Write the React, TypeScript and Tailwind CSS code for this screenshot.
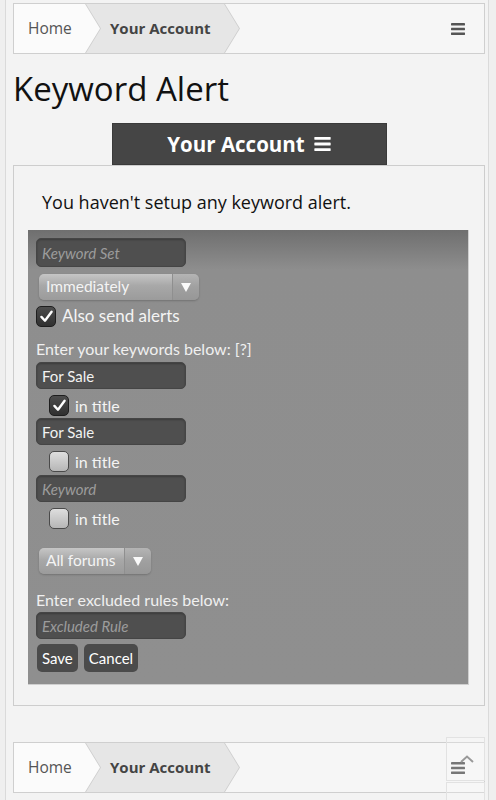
import React from 'react';

function Hamburger({ className }: { className?: string }) {
  return (
    <svg className={className} viewBox="0 0 14 12" fill="currentColor">
      <rect x="0" y="0" width="14" height="2.4" rx="0.4" />
      <rect x="0" y="4.8" width="14" height="2.4" rx="0.4" />
      <rect x="0" y="9.6" width="14" height="2.4" rx="0.4" />
    </svg>
  );
}

function Breadcrumb() {
  return (
    <div className="flex h-[51px] items-stretch border border-[#cfcfcf] bg-[#f6f6f6]">
      <div className="flex w-[86px] shrink-0 items-center bg-[#fbfbfb] pl-[14px] text-[15.5px] text-[#555]">Home</div>
      <div className="relative -ml-[15px] w-[155px] shrink-0">
        <div className="absolute inset-0 bg-[#cfcfcf] [clip-path:polygon(0_0,140px_0,155px_50%,140px_100%,0_100%,15px_50%)]" />
        <div className="absolute inset-y-0 left-[1px] w-[153px] bg-[#e6e6e6] [clip-path:polygon(0_0,138px_0,153px_50%,138px_100%,0_100%,15px_50%)]" />
        <span className="relative flex h-full items-center pl-[25px] text-[15px] font-bold text-[#444]">Your Account</span>
      </div>
      <Hamburger className="ml-auto mr-[19px] h-[12px] w-[14px] self-center text-[#555]" />
    </div>
  );
}

function Field({ value, placeholder, tall }: { value?: string; placeholder: string; tall?: boolean }) {
  return (
    <input
      readOnly
      defaultValue={value}
      placeholder={placeholder}
      className={`${tall ? 'h-[29px]' : 'h-[27px]'} w-[150px] rounded-[5px] border border-[#454545] bg-[#4f4f4f] px-[5px] text-[15px] text-[#f2f2f2] shadow-[inset_0_1px_2px_rgba(0,0,0,0.25)] outline-none placeholder:italic placeholder:text-[#9c9c9c]`}
    />
  );
}

function Select({ label, width }: { label: string; width: string }) {
  return (
    <div className={`ml-[3px] flex h-[26px] ${width} overflow-hidden rounded-[5px] shadow-[0_1px_2px_rgba(0,0,0,0.2)]`}>
      <div className="flex flex-1 items-center bg-[linear-gradient(to_bottom,#c6c6c6,#a8a8a8_45%,#9b9b9b)] pl-[7px] text-[15.5px] text-[#f4f4f4]">
        {label}
      </div>
      <div className="flex w-[27px] items-center justify-center border-l border-[#8f8f8f] bg-[linear-gradient(to_bottom,#b4b4b4,#a0a0a0_50%,#979797)]">
        <svg viewBox="0 0 10 9" className="h-[9px] w-[10px]" fill="#fafafa">
          <path d="M0 0 H10 L5 9 Z" />
        </svg>
      </div>
    </div>
  );
}

function Check({ checked }: { checked?: boolean }) {
  return checked ? (
    <div className="flex h-[21px] w-[20px] shrink-0 items-center justify-center rounded-[5px] border border-[#1e1e1e] bg-[linear-gradient(to_bottom,#4d4d4d,#303030)]">
      <svg viewBox="0 0 20 20" className="h-[17px] w-[17px]" fill="none" stroke="#fff" strokeWidth="2.8" strokeLinecap="round" strokeLinejoin="round">
        <path d="M4 10.5 L8.2 15 L16 4.5" />
      </svg>
    </div>
  ) : (
    <div className="h-[21px] w-[20px] shrink-0 rounded-[5px] border border-[#4a4a4a] bg-[linear-gradient(to_bottom,#dedede,#b6b6b6)]" />
  );
}

export default function App() {
  return (
    <div className="min-h-screen bg-[#efefef] pb-[20px] font-['Open_Sans',sans-serif]">
      <div className="ml-[5px] w-[484px] border-x border-[#dadada] bg-[#f3f3f3] pb-[20px] pl-[7px] pr-[3px] pt-[3px]">
        <Breadcrumb />

        <h1 className="mt-[14px] text-[33px] leading-[42px] text-[#111]">Keyword Alert</h1>

        <div className="mx-auto mt-[13px] flex h-[42px] w-[275px] items-center justify-center gap-[9px] border border-[#3a3a3a] bg-[#454545] text-[20.5px] font-bold text-white">
          <span>Your Account</span>
          <Hamburger className="h-[14px] w-[17px] text-white" />
        </div>

        <div className="border border-[#cdcdcd] bg-[#f3f3f3] pb-[20px] pl-[14px] pr-[15px]">
          <p className="pl-[14px] pt-[24px] text-[18px] leading-[25px] text-[#111]">You haven't setup any keyword alert.</p>

          <div className="mt-[15px] flex flex-col items-start border-b border-r border-[#cfcfcf] bg-[linear-gradient(to_bottom,#6f6f6f,#8e8e8e_40px,#8f8f8f)] pb-[12px] pl-[8px] pt-[8px] font-['Lato',sans-serif]">
            <Field placeholder="Keyword Set" tall />
            <div className="mt-[7px]">
              <Select label="Immediately" width="w-[160px]" />
            </div>
            <label className="mt-[5px] flex h-[22px] items-center gap-[6px] text-[17px] text-[#f4f4f4]">
              <Check checked />
              Also send alerts
            </label>
            <p className="mt-[11px] text-[16px] leading-[21px] text-[#f0f0f0]">Enter your keywords below: [?]</p>

            <div className="mt-[3px]"><Field value="For Sale" placeholder="Keyword" /></div>
            <label className="ml-[13px] mt-[6px] flex h-[21px] items-center gap-[6px] text-[16px] text-[#f4f4f4]">
              <Check checked />
              in title
            </label>
            <div className="mt-[2px]"><Field value="For Sale" placeholder="Keyword" /></div>
            <label className="ml-[13px] mt-[6px] flex h-[21px] items-center gap-[6px] text-[16px] text-[#f4f4f4]">
              <Check />
              in title
            </label>
            <div className="mt-[3px]"><Field placeholder="Keyword" /></div>
            <label className="ml-[13px] mt-[6px] flex h-[21px] items-center gap-[6px] text-[16px] text-[#f4f4f4]">
              <Check />
              in title
            </label>

            <div className="mt-[19px]">
              <Select label="All forums" width="w-[112px]" />
            </div>

            <p className="mt-[15px] text-[16px] leading-[21px] text-[#f0f0f0]">Enter excluded rules below:</p>
            <div className="mt-[2px]"><Field placeholder="Excluded Rule" /></div>
            <div className="ml-[1px] mt-[5px] flex gap-[6px]">
              <button className="h-[28px] rounded-[5px] bg-[#4b4b4b] px-[5px] text-[15px] text-white">Save</button>
              <button className="h-[28px] rounded-[5px] bg-[#4b4b4b] px-[5px] text-[15px] text-white">Cancel</button>
            </div>
          </div>
        </div>

        <div className="mt-[36px]">
          <Breadcrumb />
        </div>
      </div>

      <div className="fixed left-[446px] top-[737px] flex w-[39px] flex-col gap-[1px]">
        <div className="flex h-[44px] items-center justify-center border border-[#e2e2e2] bg-white/20">
          <svg viewBox="0 0 14 8" className="ml-[3px] h-[8px] w-[14px]" fill="none" stroke="#9a9a9a" strokeWidth="2">
            <path d="M1 7 L7 1.5 L13 7" />
          </svg>
        </div>
        <div className="h-[30px] border border-[#e2e2e2] bg-white/20" />
      </div>
    </div>
  );
}
